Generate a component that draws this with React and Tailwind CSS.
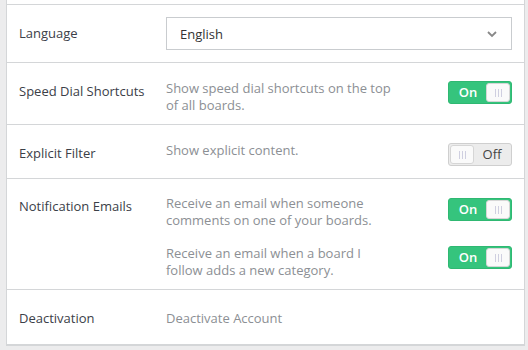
import React, { useState } from "react";

const Toggle = ({ on, onChange }) => {
  const grip = (
    <div className="flex h-full w-[24px] items-center justify-center gap-[2px] rounded-[3px] border border-[#d6d6d6] bg-[#fafafa]">
      <span className="h-[8px] w-px bg-[#cfcfe0]" />
      <span className="h-[8px] w-px bg-[#cfcfe0]" />
      <span className="h-[8px] w-px bg-[#cfcfe0]" />
    </div>
  );

  return (
    <button
      onClick={() => onChange(!on)}
      className={`flex h-[23px] w-[64px] shrink-0 items-center rounded-[3px] border p-px text-[13px] ${
        on
          ? "border-[#2fb872] bg-[#35c47d] text-white"
          : "border-[#cfcfcf] bg-[#ececec] text-[#444]"
      }`}
    >
      {on ? (
        <>
          <span className="flex-1 text-center font-semibold">On</span>
          {grip}
        </>
      ) : (
        <>
          {grip}
          <span className="flex-1 text-center">Off</span>
        </>
      )}
    </button>
  );
};

const Row = ({ label, labelClass = "", children, className = "" }) => (
  <div className={`flex border-b border-[#d4d6d8] ${className}`}>
    <div className={`w-[147px] shrink-0 text-[#3b4048] ${labelClass}`}>{label}</div>
    <div className="flex-1">{children}</div>
  </div>
);

export default function App() {
  const [speedDial, setSpeedDial] = useState(true);
  const [explicit, setExplicit] = useState(false);
  const [comments, setComments] = useState(true);
  const [category, setCategory] = useState(true);

  return (
    <div
      className="h-[350px] w-[528px] overflow-hidden bg-[#ececed] pl-[6px] pr-[3px] text-[13px]"
      style={{ fontFamily: '"Open Sans", "Noto Sans", sans-serif' }}
    >
      <div className="border-x border-b-2 border-[#d4d6d8] bg-white">
        <div className="h-[5px] border-b border-[#d4d6d8]" />

        {/* Language */}
        <Row label="Language" className="h-[58px] items-center pl-[12px] pr-[12px]">
          <div className="flex h-[33px] items-center justify-between border border-[#c9cccf] pl-[13px] pr-[13px] text-[#333]">
            <span className="pt-[2px]">English</span>
            <svg width="12" height="8" viewBox="0 0 12 8" fill="none">
              <path d="M2 2l4 4 4-4" stroke="#888" strokeWidth="1.8" />
            </svg>
          </div>
        </Row>

        {/* Speed dial */}
        <Row
          label="Speed Dial Shortcuts"
          labelClass="mt-[2px]"
          className="h-[62px] pl-[12px] pr-[12px] pt-[17px]"
        >
          <div className="flex items-start justify-between">
            <p className="w-[230px] leading-[17px] text-[#8c8f94]">
              Show speed dial shortcuts on the top of all boards.
            </p>
            <div className="mt-px">
              <Toggle on={speedDial} onChange={setSpeedDial} />
            </div>
          </div>
        </Row>

        {/* Explicit */}
        <Row label="Explicit Filter" className="h-[54px] items-center pl-[12px] pr-[12px] pt-[4px]">
          <div className="flex items-center justify-between">
            <p className="-mt-[6px] text-[#8c8f94]">Show explicit content.</p>
            <div className="mt-[2px]">
              <Toggle on={explicit} onChange={setExplicit} />
            </div>
          </div>
        </Row>

        {/* Notifications */}
        <Row
          label="Notification Emails"
          labelClass="mt-[2px]"
          className="h-[111px] pl-[12px] pr-[12px] pt-[16px]"
        >
          <div className="flex flex-col gap-[16px]">
            <div className="flex items-start justify-between">
              <p className="w-[230px] leading-[17px] text-[#8c8f94]">
                Receive an email when someone comments on one of your boards.
              </p>
              <div className="mt-[3px]">
                <Toggle on={comments} onChange={setComments} />
              </div>
            </div>
            <div className="flex items-start justify-between">
              <p className="w-[230px] leading-[17px] text-[#8c8f94]">
                Receive an email when a board I follow adds a new category.
              </p>
              <div className="mt-px">
                <Toggle on={category} onChange={setCategory} />
              </div>
            </div>
          </div>
        </Row>

        {/* Deactivation */}
        <div className="flex h-[54px] items-center pl-[12px] pr-[12px] pt-[4px]">
          <div className="w-[147px] shrink-0 text-[#3b4048]">Deactivation</div>
          <button className="text-[#8c8f94]">Deactivate Account</button>
        </div>
      </div>
    </div>
  );
}
